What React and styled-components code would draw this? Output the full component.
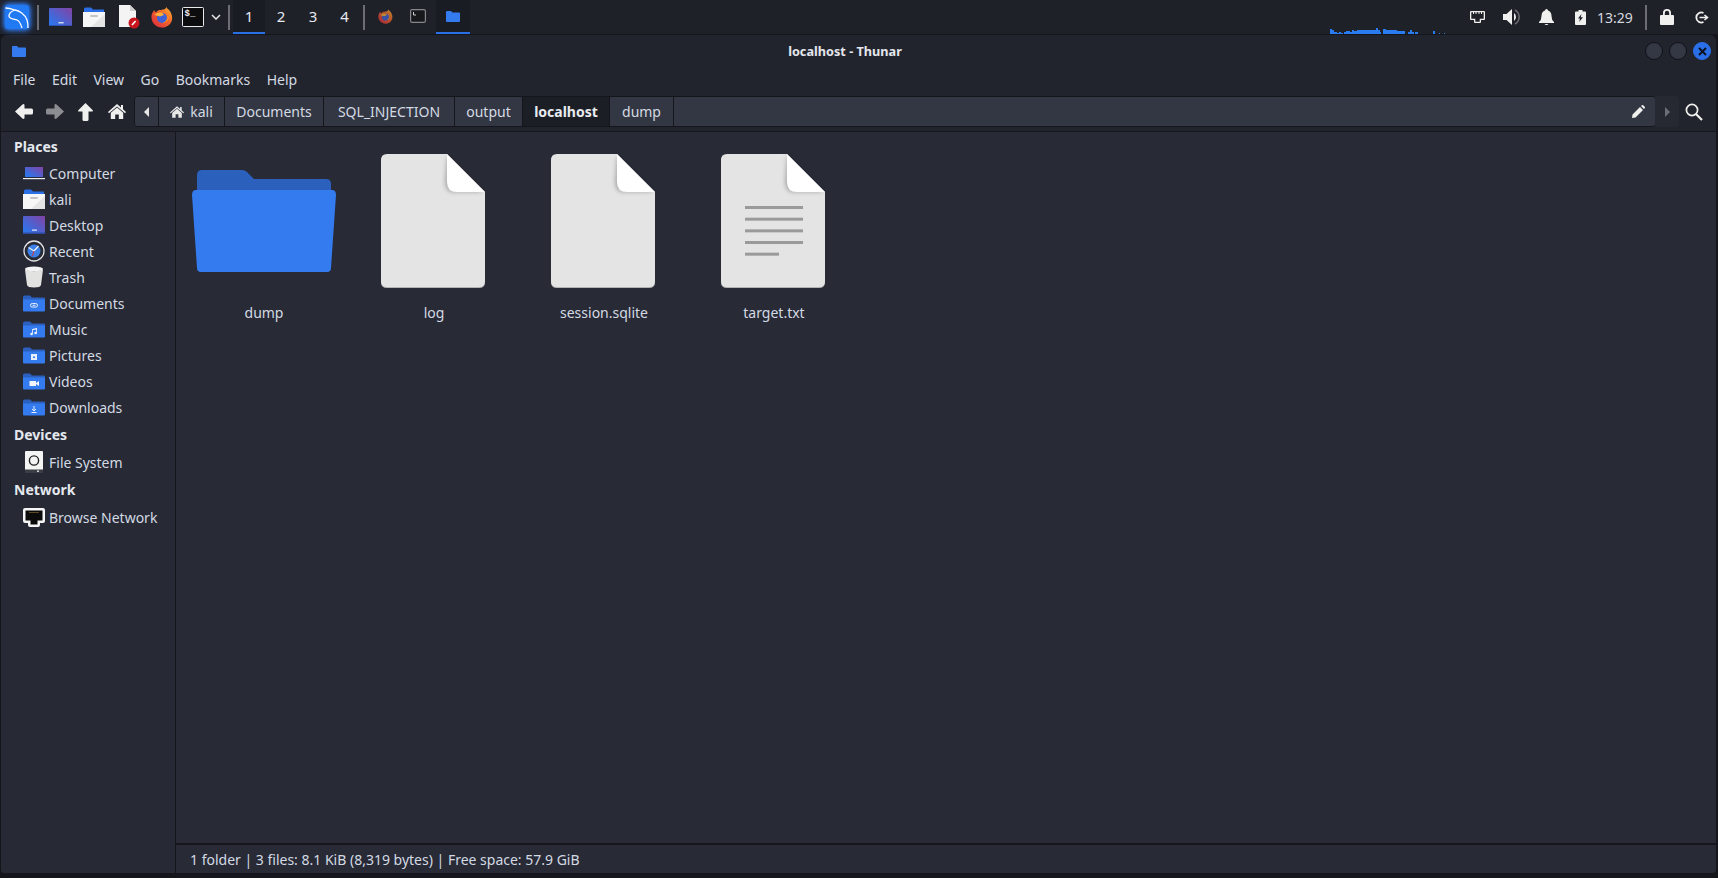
import styled, { createGlobalStyle } from 'styled-components'

const GlobalStyle = createGlobalStyle`
    html, body {
        margin: 0;
        padding: 0;
        background: #14161c;
        overflow: hidden;
    }
    * {
        box-sizing: border-box;
    }
`

const BLUE = '#347bef'
const FONT = `"Noto Sans", "Open Sans", sans-serif`

const Screen = styled.div`
    width: 1718px;
    height: 878px;
    display: flex;
    flex-direction: column;
    background: #14161c;
    font-family: ${FONT};
    font-size: 14px;
    color: #d3dae3;
`

/* ---------- top panel ---------- */

const Panel = styled.div`
    height: 34px;
    display: flex;
    align-items: stretch;
    background: #1f2129;
    flex-shrink: 0;
`

const Slot = styled.div`
    width: ${props => props.$w}px;
    margin-left: ${props => props.$ml || 0}px;
    display: flex;
    align-items: center;
    justify-content: center;
`

const PanelSep = styled.div`
    width: 2px;
    height: 25px;
    margin: 5px ${props => props.$mr || 0}px 0 ${props => props.$ml || 0}px;
    background: #6c6e74;
`

const PanelTab = styled.div`
    width: ${props => props.$w}px;
    display: flex;
    align-items: center;
    justify-content: center;
    color: #e6e8ee;
    font-size: 15px;
    padding-top: 0px;
    background: ${props => props.$active ? '#1a1c24' : 'transparent'};
    border-bottom: 2px solid ${props => props.$active ? '#2b6fe6' : 'transparent'};
`

const PanelRight = styled.div`
    margin-left: auto;
    display: flex;
    align-items: stretch;
`

const Clock = styled.div`
    width: 36px;
    display: flex;
    align-items: center;
    justify-content: center;
    font-size: 14px;
    color: #d6d8de;
    white-space: nowrap;
`

const Graph = () => {
    const ranges = [
        [0, 1, 5], [2, 3, 4], [4, 6, 2], [7, 8, 1], [9, 10, 2], [11, 12, 1],
        [14, 15, 2], [16, 19, 3], [20, 21, 2], [22, 23, 4], [24, 26, 3],
        [27, 43, 4], [44, 45, 4], [46, 47, 6], [48, 49, 4], [50, 50, 2],
        [53, 55, 5], [56, 66, 4], [67, 74, 3], [78, 79, 2], [80, 81, 4],
        [82, 83, 2], [85, 87, 2], [103, 104, 3], [109, 109, 1], [114, 114, 1],
    ]
    return <svg width="116" height="34" viewBox="0 0 116 34" style={{ marginRight: 14, display: 'block' }}>
        {ranges.map((r, i) => <rect key={i} x={r[0]} y={34 - r[2]} width={r[1] - r[0] + 1} height={r[2]} fill="#2b7bf0" />)}
    </svg>
}

/* ---------- icons ---------- */

const KaliLogo = () => <svg width="24" height="24" viewBox="0 0 24 24" style={{ filter: 'drop-shadow(0 0 2px #2f7df5) drop-shadow(0 0 3px #2f7df5)' }}>
    <rect width="24" height="24" rx="3" fill="#2279f4" />
    <path d="M0.5 3 C4 3 7 4 10 5 C14 5.5 20 9 22 15 C23 18 23 21 23 23 M10 5 C7 6 4 8 4 11 C4 14 9 14 12 15 C15 16 16 20 17 23" fill="none" stroke="#fff" strokeWidth="1.3" />
</svg>

const DesktopIcon = ({ size = 22 }) => <svg width={size} height={size * 0.82} viewBox="0 0 22 18">
    <defs>
        <linearGradient id="dsk" x1="0" y1="1" x2="1" y2="0">
            <stop offset="0.15" stopColor="#2f74ea" />
            <stop offset="0.95" stopColor="#7f45a8" />
        </linearGradient>
    </defs>
    <rect width="22" height="18" rx="1" fill="url(#dsk)" />
    <rect y="16.5" width="22" height="1.5" fill="#2d4a9e" />
    <rect x="9" y="13.5" width="5" height="1.2" fill="#e8e8f0" />
</svg>

const LaptopIcon = () => <svg width="22" height="13" viewBox="0 0 22 13">
    <rect x="2" y="0" width="18" height="10" fill="url(#dsk)" />
    <rect x="0" y="11" width="22" height="1.2" fill="#eceef2" />
</svg>

const HomeFolder = ({ size = 22 }) => <svg width={size} height={size} viewBox="0 0 22 22">
    <path d="M1 3 Q1 1.5 2.5 1.5 H8 L10 3.5 H21 V8 H1 Z" fill="#2b6fe6" />
    <path d="M0 6 H22 V21 H0 Z" fill="#f6f6f6" />
    <path d="M22 8 V21 H8 Z" fill="#e4e4e4" />
    <rect x="7" y="9" width="8" height="2" rx="1" fill="#c4c4c4" />
</svg>

const ClockIcon = () => <svg width="22" height="22" viewBox="0 0 22 22">
    <circle cx="11" cy="11" r="10" fill="#282a36" stroke="#e4e4e6" strokeWidth="1.3" />
    <circle cx="11" cy="11" r="6.5" fill="#3b7fe8" />
    <path d="M11 11 L5.5 7.5 M11 11 L15.5 6" stroke="#e8eefc" strokeWidth="1.3" />
    <path d="M11 11 L9.5 16" stroke="#d33" strokeWidth="1" />
</svg>

const TrashIcon = () => <svg width="18" height="22" viewBox="0 0 18 22">
    <ellipse cx="9" cy="3" rx="9" ry="2.5" fill="#f4f4f4" />
    <path d="M0 3.5 Q9 7 18 3.5 L16 19 Q15.5 21.5 9 21.5 Q2.5 21.5 2 19 Z" fill="#e2e2e0" />
</svg>

const PlaceFolder = ({ glyph }) => <svg width="22" height="17" viewBox="0 0 22 17">
    <path d="M0 2 Q0 0.5 1.5 0.5 H7 L9 2.5 H21 Q22 2.5 22 3.5 V6 H0 Z" fill="#2b60bf" />
    <path d="M0 4.5 H22 V15.5 Q22 16.5 21 16.5 H1 Q0 16.5 0 15.5 Z" fill={BLUE} />
    {glyph}
</svg>

const DocsGlyph = <g fill="none" stroke="#e8effc" strokeWidth="1"><rect x="7.5" y="8.5" width="7" height="3.6" rx="1.8" /><path d="M9.5 10.3 H12.5" /></g>
const MusicGlyph = <g fill="#eef3fd"><path d="M9.2 8 L14 7 V12 H13.2 V8.4 L10 9 V13 H9.2 Z" /><circle cx="8.6" cy="13" r="1.3" /><circle cx="12.6" cy="12" r="1.3" /></g>
const PictureGlyph = <g><rect x="8" y="7" width="6" height="6" fill="#e8effc" /><rect x="10" y="9.5" width="2" height="1.5" fill={BLUE} /></g>
const VideoGlyph = <path d="M6.5 8 H13 V10 L16 8 V13 L13 11 V13 H6.5 Z" fill="#f2f5fc" />
const DownloadGlyph = <path d="M11 7 V11.5 M9 10 L11 12 L13 10 M8.5 13.5 H13.5" fill="none" stroke="#e8effc" strokeWidth="1" />

const DriveIcon = () => <svg width="18" height="22" viewBox="0 0 18 22">
    <rect width="18" height="22" rx="1" fill="#f4f4f4" />
    <circle cx="9" cy="9.5" r="4.6" fill="none" stroke="#222" strokeWidth="1.4" />
    <rect y="18.5" width="18" height="3.5" fill="#3b3d44" />
    <rect x="12" y="19.5" width="2" height="1.4" fill="#ddd" />
</svg>

const PortIcon = () => <svg width="22" height="19" viewBox="0 0 22 19">
    <path d="M2 0 H20 Q22 0 22 2 V13 Q22 15 20 15 H17 V17 Q17 19 15 19 H7 Q5 19 5 17 V15 H2 Q0 15 0 13 V2 Q0 0 2 0 Z" fill="#f6f6f6" />
    <path d="M2.5 2.5 H19.5 V12.5 H14.5 V16.5 H7.5 V12.5 H2.5 Z" fill="#0b0b0b" />
    <path d="M6.5 4.5 H15.5" stroke="#a88a3c" strokeWidth="1" strokeDasharray="1 1" />
</svg>

const FolderSmall = () => <svg width="14" height="11" viewBox="0 0 14 11">
    <path d="M0 1 Q0 0 1 0 H5 L6.5 1.5 H13 Q14 1.5 14 2.5 V10 Q14 11 13 11 H1 Q0 11 0 10 Z" fill={BLUE} />
</svg>

const DocPanelIcon = () => <svg width="22" height="24" viewBox="0 0 22 24">
    <path d="M1 0 H12 L18 6 V22 H1 Z" fill="#f4f4f4" />
    <path d="M12 0 L18 6 H12 Z" fill="#cfcfcf" />
    <circle cx="16" cy="18" r="5.5" fill="#c9151e" />
    <path d="M14 20 L17.6 16" stroke="#fff" strokeWidth="1.6" />
</svg>

const Firefox = ({ size = 22, dim }) => <svg width={size} height={size} viewBox="0 0 22 22" style={{ opacity: dim ? 0.72 : 1 }}>
    <defs>
        <linearGradient id="ffx" x1="0" y1="1" x2="1" y2="0">
            <stop offset="0" stopColor="#d9263f" />
            <stop offset="0.6" stopColor="#f4692b" />
            <stop offset="1" stopColor="#fdc02f" />
        </linearGradient>
    </defs>
    <path d="M15 0.5 C16 3 19 4 20 7 C22 11 21.5 16 18 19 C14 22.5 7 22.5 3.5 18.5 C0 15 -0.5 9 2 6 C2.5 5 3 4 3.5 4 C3.5 5 4 6 5 6.5 C6 4.5 8 4 9 4 C12 4 16 3 15 0.5 Z" fill="url(#ffx)" />
    <circle cx="11" cy="12" r="5" fill="#3f62d8" />
    <path d="M3.5 9 C6 6.5 9 6 11.5 7 L13 9 L9 10.5 Z" fill="#fbb03b" />
    <path d="M16 9 C17 12 15 16.5 11 17 C14 17.5 18 15 18 11 Z" fill="#f88a2c" />
</svg>

const TerminalIcon = () => <svg width="22" height="20" viewBox="0 0 22 20">
    <rect x="0.5" y="0.5" width="21" height="19" rx="1" fill="#0c0c0e" stroke="#eaeaea" />
    <text x="2.5" y="9" fontSize="9" fontFamily="'Liberation Mono', monospace" fontWeight="700" fill="#eee">$_</text>
</svg>

const TerminalDim = () => <svg width="16" height="14" viewBox="0 0 16 14">
    <rect x="0.6" y="0.6" width="14.8" height="12.8" rx="1.5" fill="#17181c" stroke="#85878c" strokeWidth="1.2" />
    <path d="M3.5 3 V6 M3.5 6 H6" stroke="#ccc" strokeWidth="1" fill="none" />
</svg>

const Chevron = () => <svg width="10" height="6" viewBox="0 0 10 6">
    <path d="M1 1 L5 5 L9 1" fill="none" stroke="#e8e8e8" strokeWidth="1.5" />
</svg>

const Glyph = ({ w, h, vb, fill = '#f0f0ee', d }) => <svg width={w} height={h} viewBox={vb}><path d={d} fill={fill} fillRule="evenodd" /></svg>

const BackArrow = () => <Glyph w={18} h={15} vb="0 0 18 15" d="M0 7.5 L7.5 0.5 Q9 -0.5 9.5 1 V4.5 H16.5 Q18 4.5 18 6 V9 Q18 10.5 16.5 10.5 H9.5 V14 Q9 15.5 7.5 14.5 Z" />
const ForwardArrow = () => <Glyph w={18} h={15} vb="0 0 18 15" fill="#8c8d90" d="M18 7.5 L10.5 0.5 Q9 -0.5 8.5 1 V4.5 H1.5 Q0 4.5 0 6 V9 Q0 10.5 1.5 10.5 H8.5 V14 Q9 15.5 10.5 14.5 Z" />
const UpArrow = () => <Glyph w={15} h={18} vb="0 0 15 18" d="M7.5 0 L14.5 7 Q15.5 8.5 14 8.5 H10.5 V16.5 Q10.5 18 9 18 H6 Q4.5 18 4.5 16.5 V8.5 H1 Q-0.5 8.5 0.5 7 Z" />
const HomeIcon = ({ w = 18, h = 15, fill }) => <Glyph w={w} h={h} vb="0 0 18 15" fill={fill} d="M9 0 L13 3.5 V1 H15 V5.2 L18 8 L17 9.2 L9 2.4 L1 9.2 L0 8 Z M2.8 8.8 L9 3.4 L15.2 8.8 V15 H10.8 V10.5 H7.2 V15 H2.8 Z" />

const NetworkIcon = () => <Glyph w={15} h={12} vb="0 0 15 12" d="M0 1 Q0 0 1 0 H14 Q15 0 15 1 V8 Q15 9 14 9 H11 V11 Q11 12 10 12 H5 Q4 12 4 11 V9 H1 Q0 9 0 8 Z M1.3 1.3 V7.7 H5.3 V10.7 H9.7 V7.7 H13.7 V1.3 H12 V3 H11 V1.3 H9.5 V3 H8.5 V1.3 H6.5 V3 H5.5 V1.3 H4 V3 H3 V1.3 Z" />
const SpeakerIcon = () => <svg width="18" height="16" viewBox="0 0 18 16">
    <path d="M0 5 H3.5 L9 0 V16 L3.5 11 H0 Z" fill="#f0f0ee" />
    <path d="M11 4 A5 5 0 0 1 11 12 Z" fill="#f0f0ee" />
    <path d="M12 1 A8 8 0 0 1 12 15" fill="none" stroke="#6c6e74" strokeWidth="1.5" />
</svg>
const BellIcon = () => <Glyph w={15} h={16} vb="0 0 15 16" d="M7.5 0 Q9 0 9 1.5 Q12.5 2.5 12.5 7 Q12.5 11 15 13 V14 H0 V13 Q2.5 11 2.5 7 Q2.5 2.5 6 1.5 Q6 0 7.5 0 Z M5.5 15 H9.5 Q9 16 7.5 16 Q6 16 5.5 15 Z" />
const BatteryIcon = () => <Glyph w={11} h={15} vb="0 0 11 15" d="M3.5 0 H7.5 V1.5 H10 Q11 1.5 11 2.5 V14 Q11 15 10 15 H1 Q0 15 0 14 V2.5 Q0 1.5 1 1.5 H3.5 Z M6.5 4 L3 8.5 H5 L4.2 12 L8 7.2 H5.8 Z" />
const LockIcon = () => <Glyph w={14} h={16} vb="0 0 14 16" d="M3 6 V4 Q3 0 7 0 Q11 0 11 4 V6 H13 Q14 6 14 7 V15 Q14 16 13 16 H1 Q0 16 0 15 V7 Q0 6 1 6 Z M4.8 6 H9.2 V4 Q9.2 1.8 7 1.8 Q4.8 1.8 4.8 4 Z" />
const LogoutIcon = () => <svg width="15" height="13" viewBox="0 0 15 13">
    <path d="M9.5 2 A5 5 0 1 0 9.5 11" fill="none" stroke="#f0f0ee" strokeWidth="1.8" />
    <path d="M5.5 6.5 H13 M10.5 4 L13.5 6.5 L10.5 9" fill="none" stroke="#f0f0ee" strokeWidth="1.6" />
</svg>
const PencilIcon = () => <Glyph w={13} h={13} vb="0 0 13 13" d="M0 13 L0.5 9.5 L8 2 L11 5 L3.5 12.5 Z M9 1 L10 0.2 Q10.6 -0.2 11.2 0.3 L12.7 1.8 Q13.2 2.4 12.8 3 L12 4 Z" />
const SearchIcon = () => <svg width="18" height="18" viewBox="0 0 18 18">
    <circle cx="7" cy="7" r="5.6" fill="none" stroke="#f0f0ee" strokeWidth="1.7" />
    <path d="M11 11 L17 17" stroke="#f0f0ee" strokeWidth="2.2" />
</svg>

const BigFolder = () => <svg width="144" height="102" viewBox="0 0 144 102">
    <path d="M5 5 Q5 0 10 0 H50 Q53 0 55 2 L62 9 H134 Q139 9 139 14 V25 H5 Z" fill="#2b60bd" />
    <path d="M4 20 H140 Q144 20 144 25 L139 98 Q139 102 135 102 H9 Q5 102 5 98 L0 25 Q0 20 4 20 Z" fill={BLUE} />
</svg>

const BigFile = ({ lines }) => <svg width="104" height="134" viewBox="0 0 104 134">
    <defs>
        <filter id="foldShadow" x="-30%" y="-30%" width="160%" height="160%">
            <feGaussianBlur stdDeviation="2" />
        </filter>
    </defs>
    <path d="M6 1 H66 L104 39 V128 Q104 134 98 134 H6 Q0 134 0 128 V7 Q0 1 6 1 Z" fill="#b4b4b4" />
    <path d="M6 0 H66 L104 38 V127 Q104 133 98 133 H6 Q0 133 0 127 V6 Q0 0 6 0 Z" fill="#e4e4e4" />
    <path d="M66 2 L102 38 H76 Q64 40 64 28 Z" fill="#000" opacity="0.25" filter="url(#foldShadow)" />
    <path d="M66 0 L104 38 H76 Q66 38 66 28 Z" fill="#ffffff" />
    {lines && [0, 1, 2, 3, 4].map(i => <rect key={i} x="24" y={52 + i * 11.67} width={i === 4 ? 34 : 58} height="3" fill="#9a9a9a" />)}
</svg>

/* ---------- window ---------- */

const Window = styled.div`
    flex: 1;
    margin: 1px 2px 5px 1px;
    display: flex;
    flex-direction: column;
    background: #22242d;
    border-radius: 6px 6px 4px 4px;
    overflow: hidden;
`

const TitleBar = styled.div`
    height: 32px;
    display: flex;
    align-items: center;
    flex-shrink: 0;
`

const TitleIcon = styled.div`
    width: 44px;
    padding-left: 11px;
    display: flex;
    align-items: center;
`

const Title = styled.div`
    flex: 1;
    text-align: center;
    font-size: 12.7px;
    font-weight: 700;
    color: #e4e6ec;
`

const WindowButtons = styled.div`
    width: 71px;
    display: flex;
    gap: 6px;
`

const WindowButton = styled.div`
    width: 18px;
    height: 18px;
    border-radius: 50%;
    display: flex;
    align-items: center;
    justify-content: center;
    background: ${props => props.$close ? '#2a6fe8' : '#343844'};
    border: 1px solid ${props => props.$close ? '#2a6fe8' : '#10121a'};
`

const MenuBar = styled.div`
    height: 26px;
    display: flex;
    align-items: center;
    padding-left: 12px;
    padding-bottom: 2px;
    gap: 16.5px;
    flex-shrink: 0;
`

const MenuItem = styled.div`
    color: #d3dae3;
    font-size: 14px;
`

const Toolbar = styled.div`
    height: 38px;
    display: flex;
    align-items: center;
    flex-shrink: 0;
    padding-left: 8px;
    padding-bottom: 1px;
`

const NavButton = styled.div`
    width: ${props => props.$w}px;
    flex-shrink: 0;
    display: flex;
    align-items: center;
    justify-content: center;
`

const PathBar = styled.div`
    width: 1522px;
    height: 31px;
    margin-left: 1px;
    flex-shrink: 0;
    display: flex;
    align-items: stretch;
    border: 1px solid #14161c;
    border-radius: 4px;
    background: #333743;
    overflow: hidden;
`

const PathButton = styled.div`
    width: ${props => props.$w}px;
    flex: ${props => props.$grow ? 1 : 'none'};
    display: flex;
    align-items: center;
    justify-content: ${props => props.$grow ? 'flex-end' : 'center'};
    gap: 6px;
    padding-right: ${props => props.$grow ? '10px' : '0'};
    font-weight: ${props => props.$active ? 700 : 400};
    color: ${props => props.$active ? '#e8ebf0' : '#d3dae3'};
    background: ${props => props.$active ? '#1c1e26' : '#333743'};
    border-right: 1px solid #14161c;
    &:last-child {
        border-right: 0;
    }
`

const PathEnd = styled.div`
    width: 24px;
    height: 31px;
    flex-shrink: 0;
    display: flex;
    align-items: center;
    justify-content: center;
    background: #262832;
    border-radius: 0 4px 4px 0;
    margin-left: -1px;
`

const TriangleLeft = styled.div`
    width: 0;
    height: 0;
    border-style: solid;
    border-width: 5px 5px 5px 0;
    border-color: transparent #e6e6e6 transparent transparent;
`

const TriangleRight = styled.div`
    width: 0;
    height: 0;
    border-style: solid;
    border-width: 5px 0 5px 5px;
    border-color: transparent transparent transparent #6d6f76;
`

const SearchButton = styled.div`
    width: 30px;
    flex-shrink: 0;
    display: flex;
    align-items: center;
    justify-content: center;
`

const Body = styled.div`
    flex: 1;
    min-height: 0;
    display: flex;
    background: #282a36;
    border-top: 1px solid #14161c;
`

const Sidebar = styled.div`
    width: 175px;
    flex-shrink: 0;
    border-right: 1px solid #14161c;
    background: #272934;
`

const SideHeader = styled.div`
    height: 29px;
    padding-left: 13px;
    display: flex;
    align-items: center;
    font-weight: 700;
    color: #e4e8ee;
    &:first-child {
        height: 28px;
    }
`

const SideRow = styled.div`
    height: 26px;
    display: flex;
    align-items: center;
    color: #d3dae3;
`

const SideIcon = styled.div`
    width: 48px;
    padding-left: 22px;
    padding-right: 4px;
    display: flex;
    align-items: center;
    justify-content: center;
    flex-shrink: 0;
`

const Main = styled.div`
    flex: 1;
    min-width: 0;
    display: flex;
    flex-direction: column;
`

const IconGrid = styled.div`
    flex: 1;
    display: grid;
    grid-template-columns: repeat(auto-fill, 170px);
    grid-auto-rows: max-content;
    padding: 22px 0 0 2px;
`

const FileItem = styled.div`
    display: flex;
    flex-direction: column;
    align-items: center;
`

const FileIcon = styled.div`
    height: 134px;
    padding-left: ${props => props.$nudge ? 2 : 0}px;
    display: flex;
    align-items: center;
    justify-content: center;
`

const FileLabel = styled.div`
    margin-top: 15px;
    padding-left: 2px;
    line-height: 20px;
    color: #d3dae3;
`

const StatusBar = styled.div`
    height: 30px;
    padding-left: 14px;
    display: flex;
    align-items: center;
    border-top: 2px solid #14161c;
    flex-shrink: 0;
    color: #d3dae3;
`

const places = [
    ['Computer', <LaptopIcon />],
    ['kali', <HomeFolder />],
    ['Desktop', <DesktopIcon />],
    ['Recent', <ClockIcon />],
    ['Trash', <TrashIcon />],
    ['Documents', <PlaceFolder glyph={DocsGlyph} />],
    ['Music', <PlaceFolder glyph={MusicGlyph} />],
    ['Pictures', <PlaceFolder glyph={PictureGlyph} />],
    ['Videos', <PlaceFolder glyph={VideoGlyph} />],
    ['Downloads', <PlaceFolder glyph={DownloadGlyph} />],
]

const crumbs = [
    ['Documents', 99],
    ['SQL_INJECTION', 131],
    ['output', 68],
    ['localhost', 87, true],
    ['dump', 64],
]

const files = [
    ['dump', <BigFolder />, true],
    ['log', <BigFile />],
    ['session.sqlite', <BigFile />],
    ['target.txt', <BigFile lines />],
]

const SideItem = ({ name, icon }) => <SideRow>
    <SideIcon>{icon}</SideIcon>
    {name}
</SideRow>

const App = () => {
    return <Screen>
        <GlobalStyle />
        <Panel>
            <Slot $w={34}><KaliLogo /></Slot>
            <PanelSep $ml={3} $mr={5} />
            <Slot $w={33}><DesktopIcon size={23} /></Slot>
            <Slot $w={34}><HomeFolder size={22} /></Slot>
            <Slot $w={35}><DocPanelIcon /></Slot>
            <Slot $w={32}><Firefox /></Slot>
            <Slot $w={29}><TerminalIcon /></Slot>
            <Slot $w={18}><Chevron /></Slot>
            <PanelSep $ml={3} $mr={3} />
            <PanelTab $w={32} $active>1</PanelTab>
            <PanelTab $w={32}>2</PanelTab>
            <PanelTab $w={32}>3</PanelTab>
            <PanelTab $w={31}>4</PanelTab>
            <PanelSep $ml={3} $mr={5} />
            <PanelTab $w={30}><Firefox size={15} dim /></PanelTab>
            <PanelTab $w={36}><TerminalDim /></PanelTab>
            <PanelTab $w={34} $active><FolderSmall /></PanelTab>
            <PanelRight>
                <Graph />
                <Slot $w={34}><NetworkIcon /></Slot>
                <Slot $w={35}><SpeakerIcon /></Slot>
                <Slot $w={34}><BellIcon /></Slot>
                <Slot $w={34}><BatteryIcon /></Slot>
                <Clock>13:29</Clock>
                <PanelSep $ml={12} $mr={3} />
                <Slot $w={34}><LockIcon /></Slot>
                <Slot $w={34}><LogoutIcon /></Slot>
            </PanelRight>
        </Panel>
        <Window>
            <TitleBar>
                <TitleIcon><FolderSmall /></TitleIcon>
                <Title>localhost - Thunar</Title>
                <WindowButtons>
                    <WindowButton />
                    <WindowButton />
                    <WindowButton $close>
                        <svg width="9" height="9" viewBox="0 0 9 9"><path d="M1 1 L8 8 M8 1 L1 8" stroke="#0c1220" strokeWidth="2" /></svg>
                    </WindowButton>
                </WindowButtons>
            </TitleBar>
            <MenuBar>
                {['File', 'Edit', 'View', 'Go', 'Bookmarks', 'Help'].map(m => <MenuItem key={m}>{m}</MenuItem>)}
            </MenuBar>
            <Toolbar>
                <NavButton $w={30}><BackArrow /></NavButton>
                <NavButton $w={31}><ForwardArrow /></NavButton>
                <NavButton $w={30}><UpArrow /></NavButton>
                <NavButton $w={33}><HomeIcon /></NavButton>
                <PathBar>
                    <PathButton $w={24}><TriangleLeft /></PathButton>
                    <PathButton $w={66}><HomeIcon w={14} h={12} fill="#e8e8e8" />kali</PathButton>
                    {crumbs.map(c => <PathButton key={c[0]} $w={c[1]} $active={c[2]}>{c[0]}</PathButton>)}
                    <PathButton $grow><PencilIcon /></PathButton>
                </PathBar>
                <PathEnd><TriangleRight /></PathEnd>
                <SearchButton><SearchIcon /></SearchButton>
            </Toolbar>
            <Body>
                <Sidebar>
                    <SideHeader>Places</SideHeader>
                    {places.map(p => <SideItem key={p[0]} name={p[0]} icon={p[1]} />)}
                    <SideHeader>Devices</SideHeader>
                    <SideItem name="File System" icon={<DriveIcon />} />
                    <SideHeader>Network</SideHeader>
                    <SideItem name="Browse Network" icon={<PortIcon />} />
                </Sidebar>
                <Main>
                    <IconGrid>
                        {files.map(f => <FileItem key={f[0]}>
                            <FileIcon $nudge={f[2]}>{f[1]}</FileIcon>
                            <FileLabel>{f[0]}</FileLabel>
                        </FileItem>)}
                    </IconGrid>
                    <StatusBar>1 folder  |  3 files: 8.1 KiB (8,319 bytes)  |  Free space: 57.9 GiB</StatusBar>
                </Main>
            </Body>
        </Window>
    </Screen>
}

export default App
